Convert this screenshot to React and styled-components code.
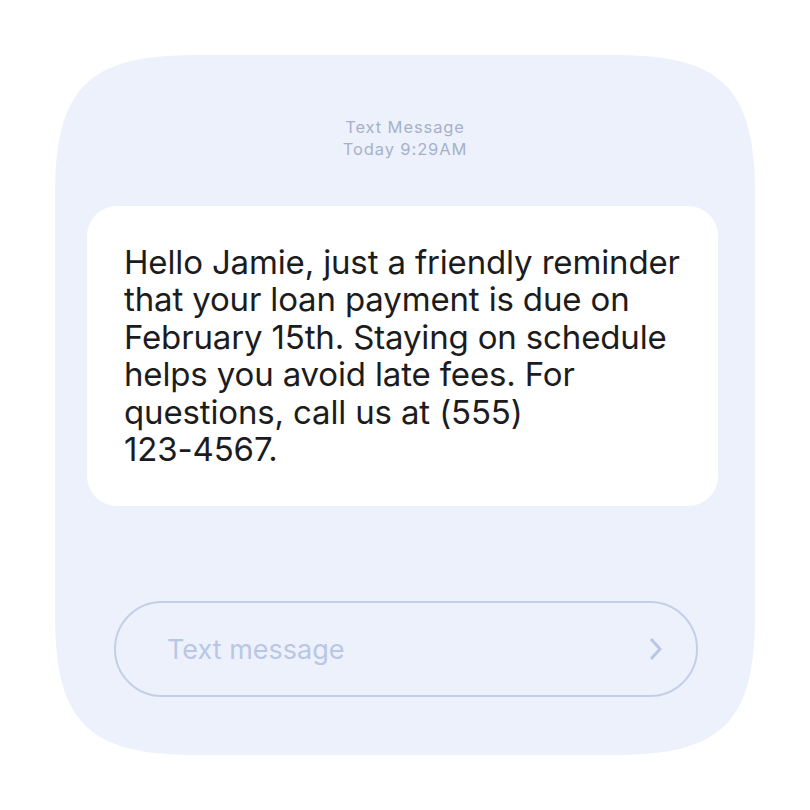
import React from "react";
import styled, { createGlobalStyle } from "styled-components";

const Global = createGlobalStyle`
  html, body {
    margin: 0;
    padding: 0;
    background: #ffffff;
    font-family: Inter, "Liberation Sans", sans-serif;
  }
`;

const Page = styled.div`
  width: 810px;
  height: 810px;
  display: flex;
  align-items: center;
  justify-content: center;
`;

// smooth (squircle) corners on the outer panel
const Card = styled.div`
  width: 700px;
  height: 700px;
  box-sizing: border-box;
  background: #edf1fc;
  clip-path: path(
    "M0,140 C0,33 33,0 140,0 L560,0 C667,0 700,33 700,140 L700,560 C700,667 667,700 560,700 L140,700 C33,700 0,667 0,560 Z"
  );
  padding: 61px 0 0 32px;
  display: flex;
  flex-direction: column;
`;

const Header = styled.div`
  width: 636px;
  text-align: center;
  font-size: 16.5px;
  letter-spacing: 0.9px;
  line-height: 22px;
  color: #a6b1c9;
`;

const Bubble = styled.div`
  margin-top: 46px;
  width: 631px;
  height: 300px;
  box-sizing: border-box;
  background: #ffffff;
  border-radius: 30px;
  padding: 38px 36px 0 37px;
  font-size: 33px;
  letter-spacing: -0.15px;
  line-height: 37.4px;
  color: #1c1c1e;
`;

const Nowrap = styled.span`
  white-space: nowrap;
`;

const InputBar = styled.div`
  margin: 95px 0 0 27px;
  width: 584px;
  height: 96px;
  box-sizing: border-box;
  border: 2px solid #c3cfe8;
  border-radius: 48px;
  display: flex;
  align-items: center;
  padding: 0 30px 0 51px;
`;

const Placeholder = styled.span`
  flex: 1;
  font-size: 27px;
  color: #b9c7e5;
`;

const Send = styled.svg`
  width: 20px;
  height: 26px;
`;

export default function App() {
  return (
    <Page>
      <Global />
      <Card>
        <Header>
          Text Message
          <br />
          Today 9:29AM
        </Header>
        <Bubble>
          Hello Jamie, just a friendly reminder that your loan payment is due
          on February 15th. Staying on schedule helps you avoid late fees. For
          questions, call us at (555) <Nowrap>123-4567.</Nowrap>
        </Bubble>
        <InputBar>
          <Placeholder>Text message</Placeholder>
          <Send viewBox="0 0 20 26">
            <path
              d="M5 3 L14 13 L5 23"
              fill="none"
              stroke="#b9c7e5"
              strokeWidth="3"
            />
          </Send>
        </InputBar>
      </Card>
    </Page>
  );
}
